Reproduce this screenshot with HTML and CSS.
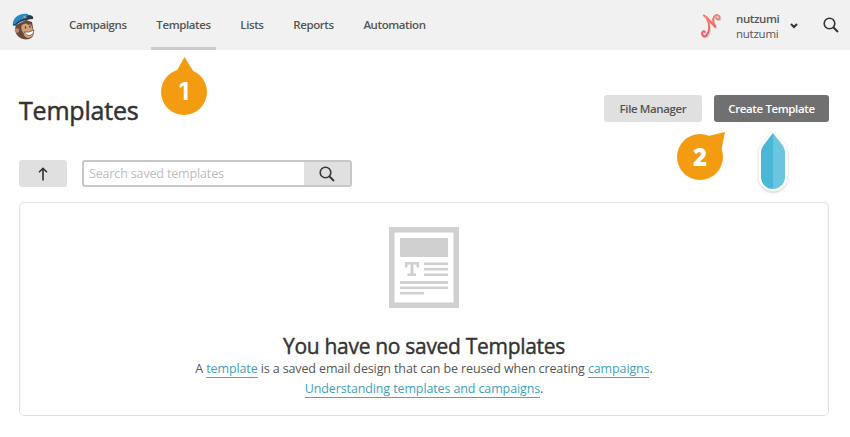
FILE: index.html
```html
<!DOCTYPE html>
<html lang="en">
<head>
<meta charset="utf-8">
<title>Templates</title>
<link rel="stylesheet" href="styles.css">
</head>
<body>
<header class="topbar">
  <svg class="logo" width="24" height="28" viewBox="0 0 24 28">
    <path d="M4 12 Q2 17 5 22 Q8 26 14 26.500 Q21 26 22 20 L20 9 L14 7Z" fill="#68483a"/>
    <path d="M10 12 Q14 9 16.500 12 Q19.500 10 20 14 L21 17 Q23 23 17 25 Q12 25 11.500 20 Q8 16 10 12Z" fill="#d0a17d"/>
    <circle cx="5" cy="17.500" r="2.300" fill="#b9886a"/>
    <path d="M12 19 Q17 20 22 17 Q22 21.500 18 22.500 Q14 23 12 19Z" fill="#fff" stroke="#6b4737" stroke-width=".7"/>
    <path d="M13.500 13.500V15.500 M18 12.500V14.500" stroke="#49352d" stroke-width="1.300"/>
    <path d="M1 13 Q0 9 3 5 Q8 0 16 1 L18 4 Q9 5 4 11Z" fill="#258bc8"/>
    <path d="M1 12 Q6 4 18 2 Q22 3 21 6 Q18 6 15 7 Q8 8 3 13Z" fill="#293a4b"/>
    <path d="M2 11 Q7 5 15 4" fill="none" stroke="#258bc8" stroke-width="2"/>
    <circle cx="12.500" cy="4" r="1.100" fill="#c9b463"/>
  </svg>
  <nav class="nav">
    <a class="nav-item">Campaigns</a>
    <a class="nav-item active">Templates</a>
    <a class="nav-item">Lists</a>
    <a class="nav-item">Reports</a>
    <a class="nav-item">Automation</a>
  </nav>
  <div class="account">
    <svg class="avatar" width="20" height="26" viewBox="0 0 20 26">
      <defs><linearGradient id="coral" x1="0" y1="0" x2="0" y2="26" gradientUnits="userSpaceOnUse"><stop offset="0" stop-color="#f58570"/><stop offset="1" stop-color="#f24d60"/></linearGradient></defs>
      <path d="M3 2.500 L5.500 4.500 L14 13.500" fill="none" stroke="url(#coral)" stroke-width="2.200" stroke-linecap="round"/>
      <path d="M14 13.500 Q11 8 12.500 5 Q14 1.500 16.500 2 Q19.500 3.500 18 6 Q15.500 7 15.500 5 M5.500 4.500 Q8.500 10 8 16 Q7 23 3 23.500 Q.5 22.500 1.200 19.500 Q2.500 17 4 19" fill="none" stroke="url(#coral)" stroke-width="1.800" stroke-linecap="round" stroke-linejoin="round"/>
    </svg>
    <div class="names"><strong>nutzumi</strong><span>nutzumi</span></div>
    <svg class="chevron" width="8" height="6" viewBox="0 0 8 6"><path d="M1 1 L4 4 L7 1" fill="none" stroke="#333" stroke-width="2"/></svg>
    <svg class="search-icon" width="16" height="16" viewBox="0 0 16 16"><circle cx="6.500" cy="6.500" r="5.300" fill="none" stroke="#333" stroke-width="1.600"/><path d="M10 10 L15 15" stroke="#333" stroke-width="2"/></svg>
  </div>
</header>
<main class="page">
  <div class="heading">
    <h1>Templates</h1>
    <div class="actions"><button class="button">File Manager</button><button class="button primary">Create Template</button></div>
  </div>
  <div class="tools">
    <button class="sort"><svg width="10" height="14" viewBox="0 0 10 14"><path d="M5 13.500 V1.500 M1 5.300 L5 1.300 L9 5.300" fill="none" stroke="#332e38" stroke-width="1.600"/></svg></button>
    <div class="search">
      <span class="field">Search saved templates</span>
      <span class="search-button"><svg width="16" height="16" viewBox="0 0 16 16"><circle cx="6.500" cy="6.500" r="5.300" fill="none" stroke="#393640" stroke-width="1.600"/><path d="M10 10 L15 15" stroke="#393640" stroke-width="2"/></svg></span>
    </div>
  </div>
  <section class="empty">
    <svg class="document" width="70" height="81" viewBox="0 0 70 81">
      <path fill="#d0d0d0" fill-rule="evenodd" d="M0 0H70V81H0Z M5.500 5.500V75.500H64.500V5.500Z"/>
      <path fill="#d0d0d0" d="M11 11H59V30H11Z M35 35.500H59V38H35Z M35 41H59V43.500H35Z M35 46.500H59V49H35Z M11 54H59V57H11Z M11 59.500H59V62H11Z M11 65H35V67.500H11Z M16 35H30V40.500H27.500V37.500H24.500V46.500H27V49H18.500V46.500H21.500V37.500H18.500V40.500H16Z"/>
    </svg>
    <h2>You have no saved Templates</h2>
    <p>A <a>template</a> is a saved email design that can be reused when creating <a>campaigns</a>.</p>
    <p><a>Understanding templates and campaigns</a>.</p>
  </section>
</main>
<div class="marker one"><svg width="46" height="58" viewBox="0 0 46 58"><path d="M23.500 0L34 17H14Z" fill="#f39c12"/><circle cx="23" cy="35" r="23" fill="#f39c12"/></svg><span>1</span></div>
<div class="marker two"><svg width="49" height="49" viewBox="0 0 49 49"><path d="M48 0L27 5L44 20Z" fill="#f39c12"/><circle cx="23" cy="25" r="23" fill="#f39c12"/></svg><span>2</span></div>
<svg class="pointer" width="36" height="68" viewBox="0 0 36 68">
  <path d="M18 5L11 14Q6 20 6 24V49A12 12 0 0 0 30 49V24Q30 19 25 14Z" fill="#fff" stroke="#fff" stroke-width="5" stroke-linejoin="round"/>
  <path d="M18 5L11 14Q6 20 6 24V49A12 12 0 0 0 18 61Z" fill="#4bb7d6"/>
  <path d="M18 5L25 14Q30 20 30 24V49A12 12 0 0 1 18 61Z" fill="#6bc5df"/>
</svg>
</body>
</html>
```
FILE: styles.css
```css
* { box-sizing: border-box; }
body { margin: 0; background: #fff; color: #333; font-family: "Open Sans", sans-serif; }
.topbar { height: 50px; background: #f1f1f1; display: flex; padding: 0 12px; }
.logo { margin-top: 13px; }
.nav { display: flex; margin-left: 28px; }
.nav-item { height: 50px; padding: 0 5px; margin-right: 19.700px; line-height: 49px; font-size: 11.500px; font-weight: 600; letter-spacing: -.4px; color: #555; white-space: nowrap; }
.nav-item.active { box-shadow: inset 0 -3px #ccc; }
.account { display: flex; margin-left: auto; }
.avatar { margin: 13px 15px 0 0; filter: drop-shadow(1px 1px 0 #d5cac8); }
.names { width: 43px; font-size: 11.500px; letter-spacing: -.25px; line-height: 16px; padding-top: 11px; color: #555; }
.names strong, .names span { display: block; }
.names strong { font-weight: 600; letter-spacing: -.4px; }
.names span { margin-top: -1px; }
.chevron { margin: 23px 25px 0 11px; }
.search-icon { margin: 17px -1px 0 0; }
.page { padding: 45px 21px 0 19px; }
.heading { display: flex; justify-content: space-between; height: 65px; }
h1 { margin: 0; font-size: 25px; line-height: 31px; font-weight: 400; letter-spacing: -.2px; -webkit-text-stroke: .5px #333; }
.actions { display: flex; gap: 12px; }
.button { width: 98px; height: 27px; padding: 0; border: 0; border-radius: 3px; background: #e0e0e0; color: #555; font: 600 11.500px "Open Sans", sans-serif; letter-spacing: -.38px; white-space: nowrap; }
.button.primary { width: 115px; color: #fff; background: #707070; }
.tools { display: flex; gap: 15px; }
.sort { display: flex; align-items: center; justify-content: center; width: 48px; height: 27px; padding: 0; border: 0; border-radius: 3px; background: #e0e0e0; }
.search { display: flex; width: 270px; height: 27px; border: 2px solid #c7c7c7; border-radius: 3px; }
.field { flex: 1; padding-left: 5px; font-size: 12.500px; letter-spacing: -.15px; line-height: 23px; color: #bbb; }
.search-button { width: 46px; background: #e0e0e0; display: flex; align-items: center; justify-content: center; }
.empty { height: 214px; margin-top: 15px; border: 1px solid #e0e0e0; border-radius: 5px; display: flex; flex-direction: column; align-items: center; }
.document { margin-top: 24px; }
h2 { margin: 23px 0 -1px; font-size: 21px; line-height: 30px; font-weight: 400; letter-spacing: -.3px; -webkit-text-stroke: .4px #333; }
.empty p { margin: 0; font-size: 12.500px; letter-spacing: -.12px; line-height: 20px; color: #555; white-space: nowrap; position: relative; top: -1px; }
.empty a { color: #3f9fb9; border-bottom: 1px solid #3faac6; }
.marker { position: absolute; }
.marker svg { display: block; }
.marker span { position: absolute; left: 0; width: 46px; text-align: center; font: 800 24px/46px "Open Sans", sans-serif; color: #fff; }
.one { left: 161px; top: 57px; }
.one span { top: 12px; font-family: Inter, sans-serif; font-weight: 700; }
.two { left: 677px; top: 132px; }
.two span { top: 2px; }
.pointer { position: absolute; left: 755px; top: 128px; filter: drop-shadow(0 1px 1px #ccc); }
```
